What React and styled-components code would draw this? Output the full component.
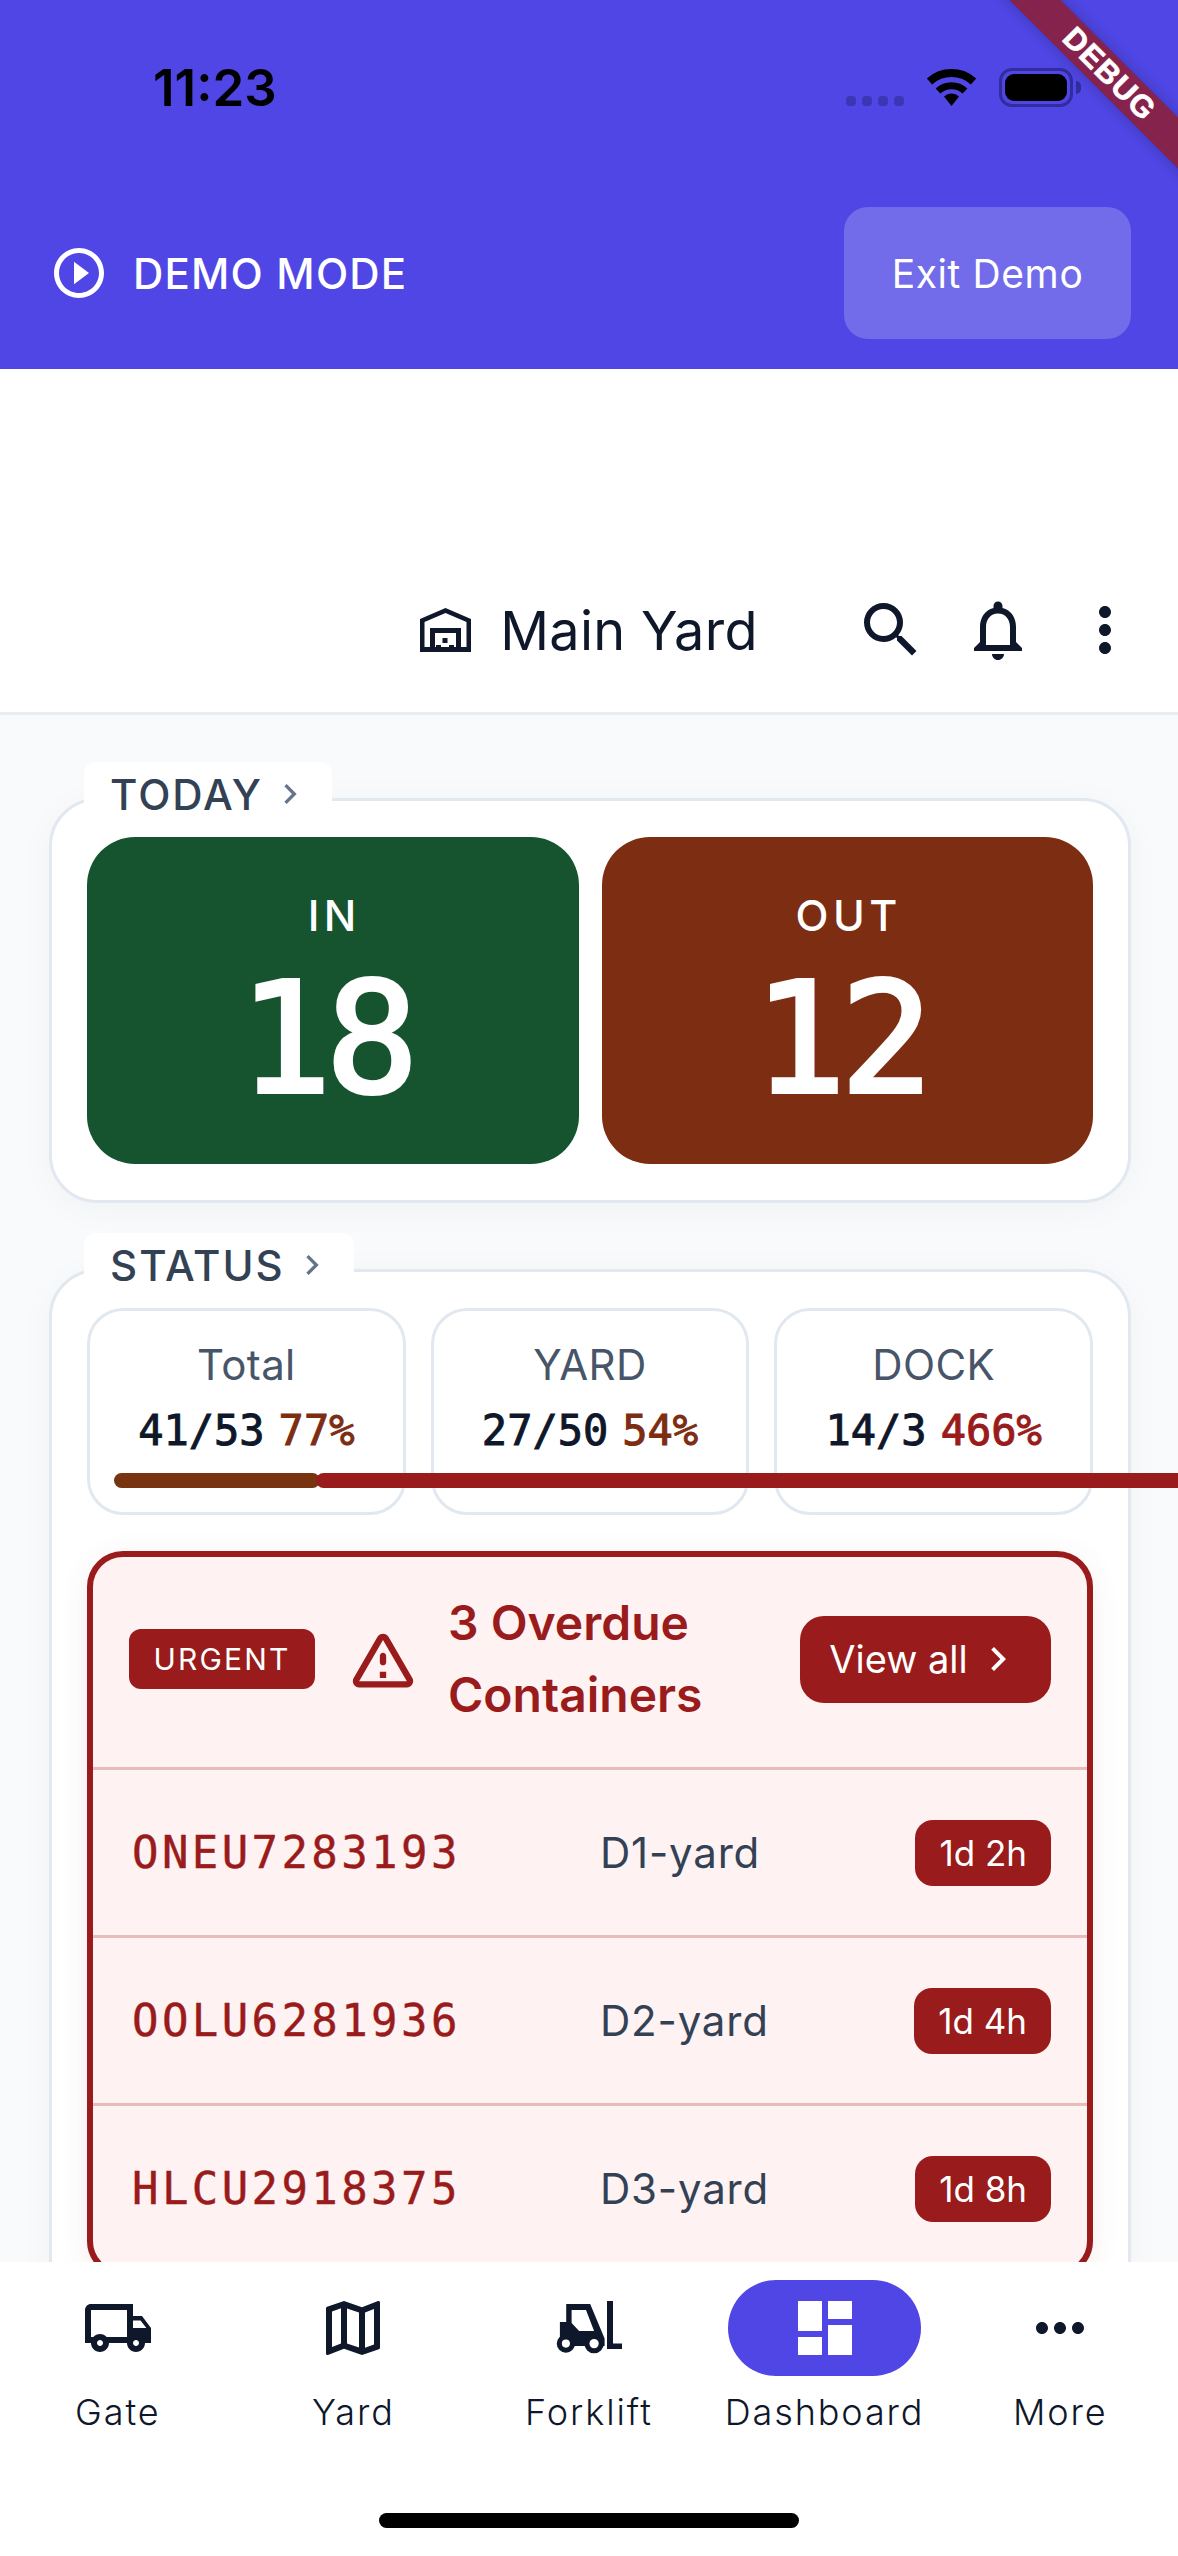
import styled, { createGlobalStyle } from "styled-components";
import {
  MdChevronRight,
  MdDashboard,
  MdMoreHoriz,
  MdMoreVert,
  MdOutlineLocalShipping,
  MdOutlineMap,
  MdOutlineNotifications,
  MdPlayCircleOutline,
  MdSearch,
} from "react-icons/md";

const MONO = `"DejaVu Sans Mono", "Liberation Mono", monospace`;
const RED = "#991b1b";
const BROWN = "#7c2d12";

const Global = createGlobalStyle`
  html, body { margin: 0; padding: 0; background: #fff; }
  * { box-sizing: border-box; }
  body { font-family: Inter, "Noto Sans", sans-serif; color: #0f172a; }
`;

const Screen = styled.div`
  position: relative;
  width: 1178px;
  height: 2556px;
  overflow: hidden;
  display: flex;
  flex-direction: column;
  background: #fff;
`;

/* flutter debug ribbon */
const Ribbon = styled.div`
  position: absolute;
  left: 907px;
  top: 54px;
  width: 400px;
  height: 36px;
  padding-left: 6px;
  transform: rotate(45deg);
  background: #85234d;
  box-shadow: 0 0 14px rgba(0, 0, 0, 0.22);
  color: #fff;
  font: 700 31px/36px "Liberation Sans", sans-serif;
  letter-spacing: 1px;
  -webkit-text-stroke: 0.6px #fff;
  text-align: center;
  z-index: 5;
`;

const Banner = styled.header`
  height: 369px;
  background: #4f46e5;
  flex: none;
`;

const StatusBar = styled.div`
  height: 207px;
  padding: 68px 105px 0 153px;
  display: flex;
  justify-content: space-between;
  align-items: flex-start;
`;

const Clock = styled.span`
  font: 600 51px/40px Inter, sans-serif;
  color: #000;
`;

const StatusIcons = styled.div`
  display: flex;
  align-items: flex-start;
`;

const SignalDots = styled.div`
  display: flex;
  gap: 6px;
  margin: 28px 22px 0 0;
`;

const SignalDot = styled.i`
  display: block;
  width: 10px;
  height: 10px;
  border-radius: 4px;
  background: #3d36b4;
`;

const Battery = styled.div`
  position: relative;
  width: 74px;
  height: 39px;
  margin-left: 22px;
  padding: 3px;
  border: 3px solid #322c9e;
  border-radius: 13px;
  &::before {
    content: "";
    display: block;
    height: 100%;
    border-radius: 9px;
    background: #000;
  }
  &::after {
    content: "";
    position: absolute;
    right: -11px;
    top: 10px;
    width: 5px;
    height: 13px;
    border-radius: 0 6px 6px 0;
    background: #322c9e;
  }
`;

const DemoRow = styled.div`
  display: flex;
  align-items: center;
  justify-content: space-between;
  padding: 0 47px 0 49px;
`;

const DemoLabel = styled.div`
  display: flex;
  align-items: center;
  gap: 24px;
  color: #fff;
  font-size: 42px;
  font-weight: 500;
  letter-spacing: 1.2px;
`;

const ExitButton = styled.button`
  width: 287px;
  height: 132px;
  border: 0;
  border-radius: 24px;
  background: rgba(255, 255, 255, 0.2);
  color: #fff;
  font: 400 39px Inter, sans-serif;
  letter-spacing: 0.6px;
`;

const AppBar = styled.div`
  flex: none;
  height: 346px;
  padding-bottom: 46px;
  display: grid;
  grid-template-columns: 1fr auto 1fr;
  align-items: end;
  background: #fff;
  border-bottom: 3px solid #e8edf3;
`;

const YardTitle = styled.div`
  grid-column: 2;
  display: flex;
  align-items: center;
  gap: 29px;
  height: 72px;
  font-size: 54px;
  font-weight: 400;
  letter-spacing: 0.3px;
  color: #0f172a;
`;

const Actions = styled.div`
  grid-column: 3;
  justify-self: end;
  margin-right: 37px;
  display: flex;
  color: #0f172a;
  svg + svg {
    margin-left: 35px;
  }
`;

const Main = styled.main`
  flex: 1;
  min-height: 0;
  overflow: hidden;
  padding: 83px 47px 0 49px;
  background: #f8fafc;
`;

const Card = styled.section`
  position: relative;
  margin-bottom: 66px;
  padding: 36px 35px 36px;
  background: #fff;
  border: 3px solid #e2e8f0;
  border-radius: 48px;
  box-shadow: 0 6px 36px rgba(15, 23, 42, 0.035);
`;

const Tab = styled.div`
  position: absolute;
  left: 32px;
  top: -39px;
  height: 64px;
  padding: 0 22px 0 26px;
  display: flex;
  align-items: center;
  gap: 13px;
  background: #fff;
  border-radius: 12px 12px 0 0;
  color: #334155;
  font-size: 42px;
  font-weight: 500;
  letter-spacing: 2px;
  svg {
    color: #64748b;
    margin-left: -6px;
  }
`;

const TileGrid = styled.div`
  display: grid;
  grid-template-columns: 1fr 1fr;
  gap: 23px;
`;

const CountTile = styled.div`
  height: 327px;
  padding-top: 53px;
  border-radius: 48px;
  background: ${(p) => p.$bg};
  color: #fff;
  display: flex;
  flex-direction: column;
  align-items: center;
`;

const CountLabel = styled.div`
  margin-left: 3px;
  font-size: 43px;
  line-height: 50px;
  font-weight: 500;
  letter-spacing: 4.5px;
`;

const CountValue = styled.div`
  margin: 12px 14px 0 0;
  font-family: ${MONO};
  font-size: 154px;
  line-height: 174px;
  font-weight: 400;
  letter-spacing: -6px;
  -webkit-text-stroke: 4px #fff;
`;

const StatRow = styled.div`
  position: relative;
  display: grid;
  grid-template-columns: repeat(3, 1fr);
  gap: 25px;
`;

const StatTile = styled.div`
  height: 207px;
  padding-top: 29px;
  border: 3px solid #e2e8f0;
  border-radius: 36px;
  text-align: center;
`;

const StatLabel = styled.div`
  font-size: 42px;
  line-height: 50px;
  letter-spacing: 0.4px;
  color: #475569;
`;

const StatValue = styled.div`
  margin-top: 16px;
  font-family: ${MONO};
  font-size: 42px;
  line-height: 50px;
  font-weight: 400;
  color: #0f172a;
  -webkit-text-stroke: 1px currentColor;
`;

const Percent = styled.span`
  margin-left: 14px;
  color: ${(p) => p.$color};
`;

/* the meters are laid over the tiles and are not clipped by them */
const Meter = styled.div`
  position: absolute;
  top: 165px;
  left: ${(p) => p.$left}px;
  width: ${(p) => p.$width}px;
  height: 15px;
  border-radius: 8px;
  background: ${(p) => p.$color};
`;

const UrgentCard = styled.div`
  margin-top: 36px;
  background: #fef2f2;
  border: 6px solid ${RED};
  border-radius: 36px;
  box-shadow: 0 6px 30px rgba(153, 27, 27, 0.08);
`;

const UrgentHead = styled.div`
  height: 210px;
  padding: 0 36px 6px 36px;
  display: flex;
  align-items: center;
`;

const UrgentBadge = styled.span`
  width: 186px;
  height: 60px;
  display: flex;
  align-items: center;
  justify-content: center;
  border-radius: 12px;
  background: ${RED};
  color: #fff;
  font-size: 30px;
  font-weight: 400;
  letter-spacing: 2.2px;
`;

const WarnIcon = styled.svg`
  width: 76px;
  height: 76px;
  margin: 0 27px 0 30px;
  fill: ${RED};
  flex: none;
`;

const UrgentTitle = styled.div`
  flex: 1;
  font-size: 48px;
  line-height: 72px;
  font-weight: 600;
  color: ${RED};
`;

const ViewAll = styled.button`
  width: 251px;
  height: 87px;
  padding: 0;
  border: 0;
  border-radius: 24px;
  background: ${RED};
  color: #fff;
  font: 400 38px Inter, sans-serif;
  display: flex;
  align-items: center;
  justify-content: center;
  gap: 6px;
`;

const ContainerRow = styled.div`
  height: 168px;
  padding: 0 36px 0 39px;
  display: grid;
  grid-template-columns: 468px 1fr auto;
  align-items: center;
  border-top: 3px solid #e9bcbc;
`;

const ContainerCode = styled.span`
  font-family: ${MONO};
  font-size: 44px;
  font-weight: 400;
  letter-spacing: 3.4px;
  color: ${RED};
  -webkit-text-stroke: 0.4px currentColor;
`;

const ContainerSpot = styled.span`
  font-size: 42px;
  letter-spacing: 0.8px;
  color: #334155;
`;

const AgeChip = styled.span`
  height: 66px;
  padding: 0 24px;
  display: flex;
  align-items: center;
  border-radius: 18px;
  background: ${RED};
  color: #fff;
  font-size: 35px;
`;

const Nav = styled.nav`
  flex: none;
  height: 294px;
  padding-top: 18px;
  background: #fff;
  display: flex;
  flex-direction: column;
  align-items: center;
`;

const NavItems = styled.div`
  width: 100%;
  display: grid;
  grid-template-columns: repeat(5, 1fr);
`;

const NavItem = styled.div`
  display: flex;
  flex-direction: column;
  align-items: center;
  color: #0f172a;
`;

const NavIcon = styled.div`
  width: 193px;
  height: 96px;
  display: flex;
  align-items: center;
  justify-content: center;
  border-radius: 48px;
  background: ${(p) => (p.$active ? "#4f46e5" : "transparent")};
  color: ${(p) => (p.$active ? "#fff" : "#0f172a")};
`;

const NavLabel = styled.span`
  margin-top: 14px;
  font-size: 36px;
  line-height: 44px;
  font-weight: 300;
  letter-spacing: 1.9px;
`;

const HomeBar = styled.div`
  width: 420px;
  height: 15px;
  margin-top: 79px;
  border-radius: 8px;
  background: #000;
`;

function WifiGlyph() {
  return (
    <svg width="51" height="37" viewBox="0 0 51 37" style={{ marginTop: 1 }}>
      <g fill="none" stroke="#000">
        <path strokeWidth="8" d="M3.5 12.5A33 33 0 0 1 47.5 12.5" />
        <path strokeWidth="7" d="M12 22A20 20 0 0 1 39 22" />
      </g>
      <path d="M25.5 37L18 27.5A11 11 0 0 1 33 27.5Z" />
    </svg>
  );
}

function WarehouseGlyph() {
  return (
    <svg width="51" height="44" viewBox="0 0 51 44" fill="#0f172a">
      <path fillRule="evenodd" d="M25.5 0L51 11V44H0V11ZM4.5 14V39H10V20H41V39H46.5V14L25.5 5ZM15 25V39H36V25Z" />
      <rect x="22.5" y="30" width="5" height="5" />
      <rect x="16" y="37" width="5" height="5" />
      <rect x="29" y="37" width="5" height="5" />
    </svg>
  );
}

function ForkliftGlyph() {
  return (
    <svg width="72" height="72" viewBox="0 0 24 24" fill="#0f172a">
      <path fillRule="evenodd" d="M4.4 4H12.4L17.2 15.5V18H2.3V10H4.4ZM6.2 6V10.3L8.7 13H13.7L11 6Z" />
      <path d="M18 3H20V17.2H23V19H18Z" />
      <circle cx="4.3" cy="17.2" r="2.2" fill="#fff" stroke="#0f172a" strokeWidth="1.7" />
      <circle cx="13.7" cy="17.2" r="2.4" fill="#fff" stroke="#0f172a" strokeWidth="1.7" />
    </svg>
  );
}

const navItems = [
  { label: "Gate", icon: <MdOutlineLocalShipping size={72} /> },
  { label: "Yard", icon: <MdOutlineMap size={72} /> },
  { label: "Forklift", icon: <ForkliftGlyph /> },
  { label: "Dashboard", icon: <MdDashboard size={72} />, active: true },
  { label: "More", icon: <MdMoreHoriz size={72} /> },
];

const stats = [
  { label: "Total", value: "41/53", pct: "77%", color: BROWN },
  { label: "YARD", value: "27/50", pct: "54%", color: BROWN },
  { label: "DOCK", value: "14/3", pct: "466%", color: RED },
];

const overdue = [
  { code: "ONEU7283193", spot: "D1-yard", age: "1d 2h" },
  { code: "OOLU6281936", spot: "D2-yard", age: "1d 4h" },
  { code: "HLCU2918375", spot: "D3-yard", age: "1d 8h" },
];

export default function App() {
  return (
    <Screen>
      <Global />
      <Ribbon>DEBUG</Ribbon>

      <Banner>
        <StatusBar>
          <Clock>11:23</Clock>
          <StatusIcons>
            <SignalDots>
              <SignalDot />
              <SignalDot />
              <SignalDot />
              <SignalDot />
            </SignalDots>
            <WifiGlyph />
            <Battery />
          </StatusIcons>
        </StatusBar>
        <DemoRow>
          <DemoLabel>
            <MdPlayCircleOutline size={60} />
            DEMO MODE
          </DemoLabel>
          <ExitButton>Exit Demo</ExitButton>
        </DemoRow>
      </Banner>

      <AppBar>
        <YardTitle>
          <WarehouseGlyph />
          Main Yard
        </YardTitle>
        <Actions>
          <MdSearch size={72} />
          <MdOutlineNotifications size={72} />
          <MdMoreVert size={72} />
        </Actions>
      </AppBar>

      <Main>
        <Card>
          <Tab>
            TODAY
            <MdChevronRight size={40} />
          </Tab>
          <TileGrid>
            <CountTile $bg="#165430">
              <CountLabel>IN</CountLabel>
              <CountValue>18</CountValue>
            </CountTile>
            <CountTile $bg={BROWN}>
              <CountLabel>OUT</CountLabel>
              <CountValue>12</CountValue>
            </CountTile>
          </TileGrid>
        </Card>

        <Card>
          <Tab>
            STATUS
            <MdChevronRight size={40} />
          </Tab>
          <StatRow>
            {stats.map((s) => (
              <StatTile key={s.label}>
                <StatLabel>{s.label}</StatLabel>
                <StatValue>
                  {s.value}
                  <Percent $color={s.color}>{s.pct}</Percent>
                </StatValue>
              </StatTile>
            ))}
            <Meter $left={27} $width={206} $color="#783311" />
            <Meter $left={229} $width={1200} $color={RED} />
          </StatRow>

          <UrgentCard>
            <UrgentHead>
              <UrgentBadge>URGENT</UrgentBadge>
              <WarnIcon viewBox="0 0 24 24">
                <path d="M12 5.99L19.53 19H4.47L12 5.99M2.74 18c-.77 1.33.19 3 1.73 3h15.06c1.54 0 2.5-1.67 1.73-3L13.73 4.99c-.77-1.33-2.69-1.33-3.46 0L2.74 18zM11 11v2c0 .55.45 1 1 1s1-.45 1-1v-2c0-.55-.45-1-1-1s-1 .45-1 1zm0 5h2v2h-2z" />
              </WarnIcon>
              <UrgentTitle>
                3 Overdue
                <br />
                Containers
              </UrgentTitle>
              <ViewAll>
                View all
                <MdChevronRight size={48} />
              </ViewAll>
            </UrgentHead>
            {overdue.map((row) => (
              <ContainerRow key={row.code}>
                <ContainerCode>{row.code}</ContainerCode>
                <ContainerSpot>{row.spot}</ContainerSpot>
                <AgeChip>{row.age}</AgeChip>
              </ContainerRow>
            ))}
          </UrgentCard>
        </Card>
      </Main>

      <Nav>
        <NavItems>
          {navItems.map((item) => (
            <NavItem key={item.label}>
              <NavIcon $active={item.active}>{item.icon}</NavIcon>
              <NavLabel>{item.label}</NavLabel>
            </NavItem>
          ))}
        </NavItems>
        <HomeBar />
      </Nav>
    </Screen>
  );
}
